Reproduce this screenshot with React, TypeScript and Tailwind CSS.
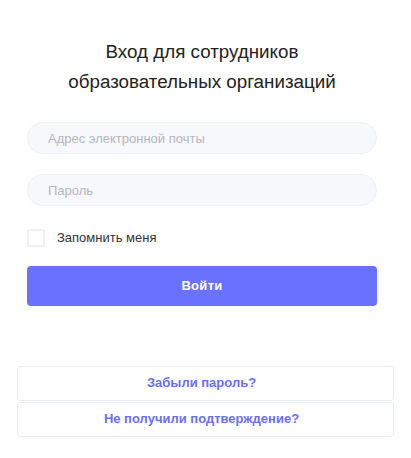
import React from 'react';

export default function App() {
  return (
    <div className="min-h-[458px] bg-white font-['Liberation_Sans',Arial,sans-serif]">
      <div className="ml-[27px] w-[350px] pt-[37px]">
        <h1 className="text-center text-[18.8px] leading-[30px] text-[#222] font-normal">
          Вход для сотрудников
          <br />
          образовательных организаций
        </h1>

        <div className="mt-[25px] flex flex-col gap-[20px]">
          <input
            type="email"
            placeholder="Адрес электронной почты"
            className="h-[32px] w-full rounded-full border border-[#f0f1f4] bg-[#f7f8fa] px-[20px] text-[13px] text-[#333] outline-none placeholder:text-[#b5b6bd]"
          />
          <input
            type="password"
            placeholder="Пароль"
            className="h-[32px] w-full rounded-full border border-[#f0f1f4] bg-[#f7f8fa] px-[20px] text-[13px] text-[#333] outline-none placeholder:text-[#b5b6bd]"
          />
        </div>

        <label className="mt-[22px] flex items-center gap-[12px]">
          <span className="h-[18px] w-[18px] rounded-[2px] border-2 border-[#eef0f6] bg-white" />
          <span className="text-[13px] text-[#333]">Запомнить меня</span>
        </label>

        <button className="mt-[18px] h-[40px] w-full rounded-[4px] bg-[#6a70ff] text-[13px] font-bold tracking-[0.3px] text-white">
          Войти
        </button>
      </div>

      <div className="mx-[17px] mt-[60px] flex flex-col gap-[1px]">
        <a className="flex h-[35px] items-center justify-center rounded-[3px] border border-[#ebedf1] bg-white pr-[8px] text-[13px] font-bold text-[#6b6ef5]">
          Забыли пароль?
        </a>
        <a className="flex h-[35px] items-center justify-center rounded-[3px] border border-[#ebedf1] bg-white pr-[8px] text-[13px] font-bold text-[#6b6ef5]">
          Не получили подтверждение?
        </a>
      </div>
    </div>
  );
}
